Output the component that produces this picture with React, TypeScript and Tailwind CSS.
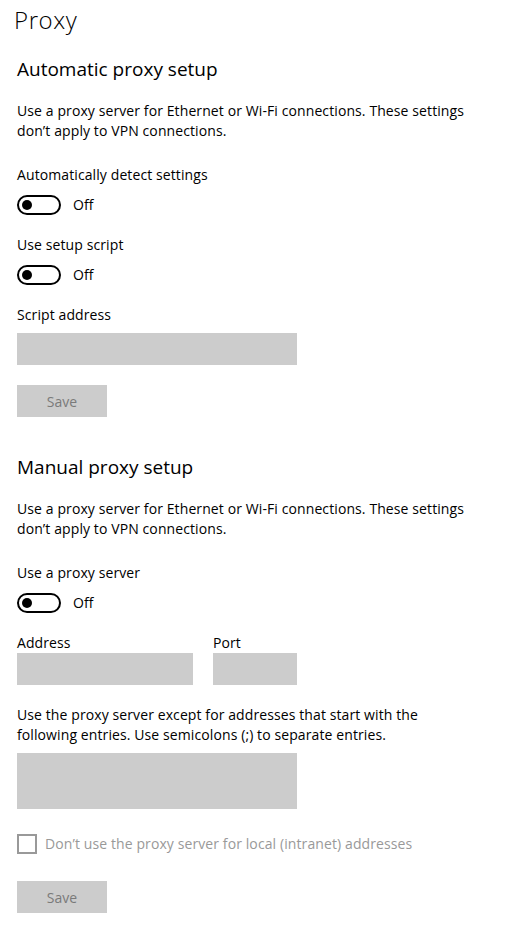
import React from 'react';

const font = { fontFamily: '"Open Sans", "Noto Sans", sans-serif' };

const Toggle = () => (
  <div className="flex items-center h-5">
    <div className="w-11 h-5 rounded-full border-2 border-black flex items-center pl-[3px]">
      <span className="w-2.5 h-2.5 rounded-full bg-black" />
    </div>
    <span className="ml-3 text-[14px] leading-5">Off</span>
  </div>
);

const SaveButton = () => (
  <div className="w-[90px] h-8 bg-[#cccccc] flex items-center justify-center text-[14px] text-[#7a7a7a]">
    Save
  </div>
);

export default function App() {
  return (
    <div className="w-[518px] h-[934px] bg-white text-black overflow-hidden" style={font}>
      <div className="pl-[14px] pt-[5px] text-[24px] leading-[30px] font-light tracking-[0.6px]">Proxy</div>

      <div className="px-[17px]">
        <h2 className="mt-[20px] text-[19px] leading-[28px] font-normal">Automatic proxy setup</h2>
        <p className="mt-[18px] text-[14px] leading-5 tracking-[0.1px]">
          Use a proxy server for Ethernet or Wi-Fi connections. These settings
          <br />
          don’t apply to VPN connections.
        </p>

        <div className="mt-6 text-[14px] leading-5 tracking-[0.1px]">Automatically detect settings</div>
        <div className="mt-2.5"><Toggle /></div>

        <div className="mt-5 text-[14px] leading-5 tracking-[0.1px]">Use setup script</div>
        <div className="mt-2.5"><Toggle /></div>

        <div className="mt-5 text-[14px] leading-5 tracking-[0.1px]">Script address</div>
        <div className="mt-2 w-[280px] h-8 bg-[#cccccc]" />
        <div className="mt-5"><SaveButton /></div>

        <h2 className="mt-[36px] text-[19px] leading-[28px] font-normal">Manual proxy setup</h2>
        <p className="mt-[18px] text-[14px] leading-5 tracking-[0.1px]">
          Use a proxy server for Ethernet or Wi-Fi connections. These settings
          <br />
          don’t apply to VPN connections.
        </p>

        <div className="mt-6 text-[14px] leading-5 tracking-[0.1px]">Use a proxy server</div>
        <div className="mt-2.5"><Toggle /></div>

        <div className="mt-5 flex gap-5">
          <div>
            <div className="text-[14px] leading-5 tracking-[0.1px]">Address</div>
            <div className="w-[176px] h-8 bg-[#cccccc]" />
          </div>
          <div>
            <div className="text-[14px] leading-5 tracking-[0.1px]">Port</div>
            <div className="w-[84px] h-8 bg-[#cccccc]" />
          </div>
        </div>

        <p className="mt-5 text-[14px] leading-5 tracking-[0.1px]">
          Use the proxy server except for addresses that start with the
          <br />
          following entries. Use semicolons (;) to separate entries.
        </p>
        <div className="mt-2 w-[280px] h-14 bg-[#cccccc]" />

        <div className="mt-[25px] flex items-center h-5">
          <span className="w-5 h-5 border-2 border-[#999999]" />
          <span className="ml-2 text-[14px] leading-5 text-[#999999] tracking-[0.1px]">
            Don’t use the proxy server for local (intranet) addresses
          </span>
        </div>

        <div className="mt-[27px]"><SaveButton /></div>
      </div>
    </div>
  );
}
